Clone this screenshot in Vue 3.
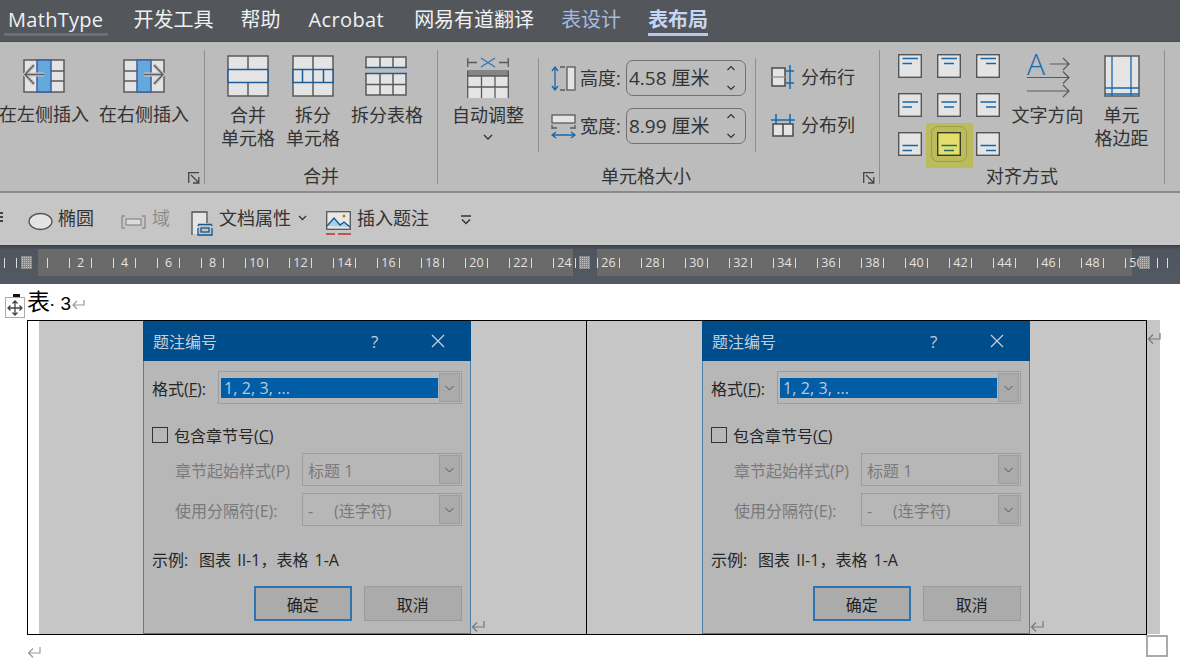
<template>
  <div class="app">
    <nav class="tabs">
      <span
        v-for="tab in tabs"
        :key="tab.name"
        class="tab"
        :class="tab.cls"
      >{{ tab.name }}</span>
    </nav>

    <section class="ribbon">
      <!-- 行和列 -->
      <div class="group group-rows">
        <div class="big-btns">
          <div class="big-btn insert-btn">
            <svg class="icon" width="42" height="34" viewBox="0 0 42 34">
              <rect x="1" y="1" width="40" height="32" fill="#e4e4e4" stroke="#5a5a5a" stroke-width="1.5" />
              <rect x="14" y="1" width="14" height="32" fill="#64a8dc" stroke="#3c5fa0" stroke-width="1.5" />
              <path d="M28 12h13M28 22h13" stroke="#5a5a5a" stroke-width="1.5" fill="none" />
              <path d="M21 15.5H3M11 6l-9 9.500 9 9.500" stroke="#c8c8c8" stroke-width="4" fill="none" />
              <path d="M21 15.500H3M11 6l-9 9.500 9 9.500" stroke="#5f5f5f" stroke-width="1.500" fill="none" />
            </svg>
            <span>在左侧插入</span>
          </div>
          <div class="big-btn insert-btn">
            <svg class="icon" width="42" height="34" viewBox="0 0 42 34">
              <rect x="1" y="1" width="40" height="32" fill="#e4e4e4" stroke="#5a5a5a" stroke-width="1.5" />
              <rect x="14" y="1" width="14" height="32" fill="#64a8dc" stroke="#3c5fa0" stroke-width="1.5" />
              <path d="M1 12h13M1 22h13" stroke="#5a5a5a" stroke-width="1.5" fill="none" />
              <path d="M21 15.500h18M31 6l9 9.500-9 9.500" stroke="#c8c8c8" stroke-width="4" fill="none" />
              <path d="M21 15.500h18M31 6l9 9.500-9 9.500" stroke="#5f5f5f" stroke-width="1.500" fill="none" />
            </svg>
            <span>在右侧插入</span>
          </div>
        </div>
        <svg class="launcher" width="12" height="12" viewBox="0 0 12 12">
          <path d="M.7 11V.7H11M3 3l7.500 7.500M10.800 5v6H5" fill="none" stroke="#444" stroke-width="1.300" />
        </svg>
      </div>

      <!-- 合并 -->
      <div class="group group-merge">
        <div class="big-btns">
          <div class="big-btn merge-btn">
            <svg class="icon tall" width="42" height="42" viewBox="0 0 42 42">
              <rect x="1" y="1" width="40" height="40" fill="#e4e4e4" stroke="#5a5a5a" stroke-width="1.500" />
              <path d="M21 1v14M21 27v14" stroke="#5a5a5a" stroke-width="1.500" />
              <rect x="1" y="14.500" width="40" height="13" fill="#e4e4e4" stroke="#1f5c96" stroke-width="1.500" />
            </svg>
            <span>合并<br />单元格</span>
          </div>
          <div class="big-btn split-btn">
            <svg class="icon tall" width="42" height="42" viewBox="0 0 42 42">
              <rect x="1" y="1" width="40" height="40" fill="#e4e4e4" stroke="#5a5a5a" stroke-width="1.500" />
              <path d="M21 1v14M21 27v14" stroke="#5a5a5a" stroke-width="1.500" />
              <rect x="1" y="14.500" width="40" height="13" fill="#e4e4e4" stroke="#1f5c96" stroke-width="1.500" />
              <path d="M10.500 14v13M21 14v13M31.500 14v13" stroke="#1f5c96" stroke-width="1.500" />
            </svg>
            <span>拆分<br />单元格</span>
          </div>
          <div class="big-btn table-btn">
            <svg class="icon tall" width="42" height="42" viewBox="0 0 42 42">
              <rect x="1" y="2" width="40" height="38" fill="#e4e4e4" stroke="#5a5a5a" stroke-width="1.500" />
              <path d="M15 2v11M28 2v11M15 19v21M28 19v21M1 29.500h40" stroke="#5a5a5a" stroke-width="1.500" />
              <rect x="0" y="13" width="42" height="5.500" fill="#bcbcbc" />
              <path d="M0 12.500h42M0 18.500h42" stroke="#1f5c96" stroke-width="1.500" />
            </svg>
            <span>拆分表格</span>
          </div>
        </div>
        <div class="group-label">合并</div>
      </div>

      <!-- 单元格大小 -->
      <div class="group group-size">
        <div class="size-body">
          <div class="auto-btn">
            <svg class="icon" width="42" height="41" viewBox="0 0 42 41">
              <path d="M.7 1v9M41.300 1v9M1 5.500h9M32 5.500h9" stroke="#5a5a5a" stroke-width="1.300" />
              <path d="M14 1l14 9M28 1L14 10" stroke="#2a77b8" stroke-width="1.300" />
              <rect x="0" y="14" width="42" height="27" fill="#e4e4e4" />
              <rect x="0" y="13" width="42" height="6" fill="#858585" />
              <path d="M.7 14v27M41.300 14v27M14.500 19v22M28 19v22M0 30h42M0 19h42" stroke="#5a5a5a" stroke-width="1.300" />
            </svg>
            <span>自动调整</span>
            <svg class="auto-chev" width="10" height="7" viewBox="0 0 10 7">
              <path d="M1 1l4 4 4-4" fill="none" stroke="#333" stroke-width="1.300" />
            </svg>
          </div>
          <div class="v-sep"></div>
          <div class="size-fields">
            <div class="size-row">
              <svg width="26" height="25" viewBox="0 0 26 25">
                <path d="M4 1v23M1 5l3-4 3 4M1 20l3 4 3-4" fill="none" stroke="#1468ad" stroke-width="1.300" />
                <path d="M9 1h5M9 24h5" stroke="#5a5a5a" stroke-width="1.300" />
                <rect x="16" y="1" width="8" height="23" fill="#e4e4e4" stroke="#5a5a5a" stroke-width="1.300" />
              </svg>
              <label>高度:</label>
              <div class="spin">
                <span>4.58 厘米</span>
                <svg width="10" height="28" viewBox="0 0 10 28">
                  <path d="M1.500 6l3.500-3.500L8.500 6M1.500 22l3.500 3.500L8.500 22" fill="none" stroke="#333" stroke-width="1.200" />
                </svg>
              </div>
            </div>
            <div class="size-row">
              <svg width="26" height="25" viewBox="0 0 26 25">
                <rect x="1" y="1" width="23" height="8" fill="#e4e4e4" stroke="#5a5a5a" stroke-width="1.300" />
                <path d="M1 11v4M24 11v4M1 14h5M19 14h5" stroke="#5a5a5a" stroke-width="1.300" fill="none" />
                <path d="M1 21h23M5 18l-4 3 4 3M20 18l4 3-4 3" fill="none" stroke="#1468ad" stroke-width="1.300" />
              </svg>
              <label>宽度:</label>
              <div class="spin">
                <span>8.99 厘米</span>
                <svg width="10" height="28" viewBox="0 0 10 28">
                  <path d="M1.500 6l3.500-3.500L8.500 6M1.500 22l3.500 3.500L8.500 22" fill="none" stroke="#333" stroke-width="1.200" />
                </svg>
              </div>
            </div>
          </div>
          <div class="v-sep sep-right"></div>
          <div class="dist-col">
            <div class="dist-row">
              <svg width="24" height="24" viewBox="0 0 24 24">
                <rect x="1" y="3" width="13" height="18" fill="#e4e4e4" stroke="#4a4a4a" stroke-width="1.500" />
                <path d="M1 12h13" stroke="#9a9a9a" stroke-width="1.500" />
                <path d="M19 0v24M15 6h8M15 18h8" stroke="#1468ad" stroke-width="1.500" />
              </svg>
              <span>分布行</span>
            </div>
            <div class="dist-row">
              <svg width="24" height="24" viewBox="0 0 24 24">
                <rect x="2" y="11" width="20" height="12" fill="#e4e4e4" stroke="#4a4a4a" stroke-width="1.500" />
                <path d="M12 11v12" stroke="#4a4a4a" stroke-width="1.500" />
                <path d="M0 7h24M5 1v10M19 1v10" stroke="#1468ad" stroke-width="1.500" />
              </svg>
              <span>分布列</span>
            </div>
          </div>
        </div>
        <div class="group-label label-size">单元格大小</div>
        <svg class="launcher" width="12" height="12" viewBox="0 0 12 12">
          <path d="M.7 11V.7H11M3 3l7.500 7.500M10.800 5v6H5" fill="none" stroke="#444" stroke-width="1.300" />
        </svg>
      </div>

      <!-- 对齐方式 -->
      <div class="group group-align">
        <div class="align-body">
          <div class="align-grid">
            <div
              v-for="a in aligns"
              :key="a.key"
              class="align-cell"
              :class="{ active: a.active }"
            >
              <svg width="24" height="24" viewBox="0 0 24 24">
                <rect x=".7" y=".7" width="22.600" height="22.600" :fill="a.active ? '#e5de6c' : '#e4e4e4'" :stroke="a.active ? '#3c3c24' : '#555'" stroke-width="1.400" />
                <path :d="a.d" :stroke="a.active ? '#16706c' : '#1468ad'" stroke-width="1.300" fill="none" />
              </svg>
            </div>
          </div>
          <div class="big-btn dir-btn">
            <svg class="icon dir-icon" width="44" height="44" viewBox="0 0 44 44">
              <text x="0" y="22" class="dir-a">A</text>
              <path d="M23 11h19M36 5l6 6-6 6" fill="none" stroke="#5a5a5a" stroke-width="1.200" />
              <path d="M0 24.500h42M36 18.500l6 6-6 6" fill="none" stroke="#5a5a5a" stroke-width="1.200" />
              <path d="M0 38h42M36 32l6 6-6 6" fill="none" stroke="#5a5a5a" stroke-width="1.200" />
            </svg>
            <span>文字方向</span>
          </div>
          <div class="big-btn margin-btn">
            <svg class="icon" width="36" height="42" viewBox="0 0 36 42">
              <rect x="1" y="1" width="34" height="40" fill="#e4e4e4" stroke="#5a5a5a" stroke-width="1.500" />
              <path d="M8 1v40M27 1v40M1 33h34M1 39h34" stroke="#1468ad" stroke-width="1.300" />
            </svg>
            <span>单元<br />格边距</span>
          </div>
        </div>
        <div class="group-label">对齐方式</div>
      </div>
    </section>

    <section class="quick">
      <span class="quick-cut"></span>
      <svg class="q-ellipse" width="25" height="19" viewBox="0 0 25 19">
        <ellipse cx="12.500" cy="9.500" rx="11.500" ry="8" fill="#e4e4e4" stroke="#555" stroke-width="1.300" />
      </svg>
      <span class="q-text q-oval">椭圆</span>
      <svg class="q-field" width="25" height="14" viewBox="0 0 25 14">
        <path d="M4 1H1v12h3M21 1h3v12h-3" fill="none" stroke="#8d8d8d" stroke-width="1.300" />
        <rect x="5" y="4" width="15" height="6" fill="#dcdcdc" stroke="#8d8d8d" stroke-width="1.300" />
      </svg>
      <span class="q-text q-off">域</span>
      <svg class="q-doc" width="22" height="25" viewBox="0 0 22 25">
        <rect x="1.500" y="2" width="14" height="21" fill="#e4e4e4" />
        <path d="M1 24V1h15v11" fill="none" stroke="#555" stroke-width="1.300" />
        <rect x="7" y="13" width="14" height="11" fill="#c6c6c6" />
        <path d="M7 17v7h14v-7M7 14v1M21 14v1M7 13.500h14" fill="none" stroke="#14588f" stroke-width="1.300" />
        <rect x="10" y="17" width="8" height="4" fill="none" stroke="#14588f" stroke-width="1.300" />
      </svg>
      <span class="q-text q-prop">文档属性</span>
      <svg class="q-chev" width="9" height="6" viewBox="0 0 9 6">
        <path d="M1 1l3.500 3.500L8 1" fill="none" stroke="#333" stroke-width="1.300" />
      </svg>
      <svg class="q-pic" width="25" height="25" viewBox="0 0 25 25">
        <rect x=".7" y=".7" width="23.600" height="17.600" fill="#e8e8e8" stroke="#555" stroke-width="1.300" />
        <path d="M1 15l7-8 6 7 4-3 6 5" fill="#a9cfe8" stroke="#14588f" stroke-width="1.300" />
        <circle cx="18" cy="5" r="1.500" fill="#c77c1c" />
        <path d="M0 23h9M12 23h13" stroke="#b8322c" stroke-width="1.400" />
      </svg>
      <span class="q-text q-cap">插入题注</span>
      <svg class="q-more" width="12" height="11" viewBox="0 0 12 11">
        <path d="M1 1h10M2 4.500l4 4 4-4" fill="none" stroke="#333" stroke-width="1.500" />
      </svg>
    </section>

    <section class="ruler">
      <div class="band band-a"></div>
      <div class="band band-b"></div>
      <span class="r-tick tick-1"></span>
      <span class="r-tick tick-2"></span>
      <span class="r-tick tick-3"></span>
      <span class="r-tick tick-4"></span>
      <div class="scale">
        <div v-for="n in 50" :key="n" class="scale-cell">
          <span v-if="n % 2 === 0">{{ n }}</span>
        </div>
      </div>
      <i class="grip grip-1"></i>
      <i class="grip grip-2"></i>
      <i class="grip grip-3"></i>
    </section>

    <main class="doc">
      <span class="cursor-mark"></span>
      <div class="move-handle">
        <svg width="16" height="16" viewBox="0 0 16 16">
          <path d="M8 1v14M1 8h14M5.500 3.500L8 1l2.500 2.500M5.500 12.500L8 15l2.500-2.500M3.500 5.500L1 8l2.500 2.500M12.500 5.500L15 8l-2.500 2.500" fill="none" stroke="#444" stroke-width="1.300" />
        </svg>
      </div>
      <div class="caption">
        <span class="cap-big">表</span><span class="cap-num">·&nbsp;3</span>
        <svg class="ret" width="13" height="10" viewBox="0 0 13 10">
          <path d="M12 0v5H1M5 1L1 5l4 4" fill="none" stroke="#999" stroke-width="1.200" />
        </svg>
      </div>
      <div class="table-wrap">
        <div class="table">
          <div v-for="i in 2" :key="i" class="cell" :class="'cell-' + i">
            <div class="dialog">
              <header class="dlg-title">
                <span class="dlg-name">题注编号</span>
                <span class="dlg-help">?</span>
                <svg class="dlg-close" width="14" height="14" viewBox="0 0 14 14">
                  <path d="M1 1l12 12M13 1L1 13" stroke="#c4d2de" stroke-width="1.200" />
                </svg>
              </header>
              <div class="dlg-body">
                <div class="row row-format">
                  <span class="lbl lbl-format">格式(<u>F</u>):</span>
                  <div class="combo combo-format">
                    <span class="combo-value selected">1, 2, 3, ...</span>
                    <span class="combo-btn">
                      <svg width="9" height="6" viewBox="0 0 9 6"><path d="M.5 1l4 4 4-4" fill="none" stroke="#555" stroke-width="1" /></svg>
                    </span>
                  </div>
                </div>
                <div class="row row-check">
                  <span class="checkbox"></span>
                  <span class="lbl">包含章节号(<u>C</u>)</span>
                </div>
                <div class="row row-sub">
                  <span class="lbl lbl-off lbl-sub">章节起始样式(P)</span>
                  <div class="combo combo-sub">
                    <span class="combo-value off">标题 1</span>
                    <span class="combo-btn">
                      <svg width="9" height="6" viewBox="0 0 9 6"><path d="M.5 1l4 4 4-4" fill="none" stroke="#555" stroke-width="1" /></svg>
                    </span>
                  </div>
                </div>
                <div class="row row-sub row-sub2">
                  <span class="lbl lbl-off lbl-sub">使用分隔符(E):</span>
                  <div class="combo combo-sub">
                    <span class="combo-value off">-&nbsp;&nbsp;&nbsp;&nbsp;&nbsp;(连字符)</span>
                    <span class="combo-btn">
                      <svg width="9" height="6" viewBox="0 0 9 6"><path d="M.5 1l4 4 4-4" fill="none" stroke="#555" stroke-width="1" /></svg>
                    </span>
                  </div>
                </div>
                <div class="sample"><span class="sample-key">示例:</span>图表 II-1，表格 1-A</div>
                <div class="dlg-actions">
                  <button type="button" class="btn btn-ok">确定</button>
                  <button type="button" class="btn">取消</button>
                </div>
              </div>
            </div>
            <svg class="ret cell-ret" width="14" height="13" viewBox="0 0 14 13">
              <path d="M13 1v6H2M6 2.500L1.500 7 6 11.500" fill="none" stroke="#777" stroke-width="1.200" />
            </svg>
          </div>
        </div>
        <div class="table-ext">
          <svg class="ret" width="14" height="13" viewBox="0 0 14 13">
            <path d="M13 1v6H2M6 2.500L1.500 7 6 11.500" fill="none" stroke="#777" stroke-width="1.200" />
          </svg>
        </div>
      </div>
      <div class="after">
        <svg class="ret" width="14" height="13" viewBox="0 0 14 13">
          <path d="M13 1v6H2M6 2.500L1.500 7 6 11.500" fill="none" stroke="#999" stroke-width="1.200" />
        </svg>
      </div>
      <span class="resize-handle"></span>
    </main>
  </div>
</template>

<script setup>
const tabs = [
  { name: 'MathType', cls: 'tab-math' },
  { name: '开发工具' },
  { name: '帮助', cls: 'tab-help' },
  { name: 'Acrobat', cls: 'tab-acro' },
  { name: '网易有道翻译' },
  { name: '表设计', cls: 'tab-ctx' },
  { name: '表布局', cls: 'tab-active' },
];

// 九宫格对齐图标: 长线和短线的位置
const xs = [
  [4.5, 14],
  [7, 17],
  [10, 20],
];
const ys = [
  [4.5, 9.5],
  [9, 14],
  [13.5, 18.5],
];
const aligns = [];
ys.forEach((y, r) => {
  xs.forEach((x, c) => {
    aligns.push({
      key: r + '-' + c,
      active: r === 2 && c === 1,
      d: `M4.5 ${y[0]}H20M${x[0]} ${y[1]}H${x[1]}`,
    });
  });
});
</script>

<style scoped>
.app {
  width: 1180px;
  height: 665px;
  overflow: hidden;
  font-family: "Open Sans", "Noto Sans CJK SC", sans-serif;
  color: #333;
  background: #fff;
}

/* 选项卡 */
.tabs {
  height: 41px;
  box-sizing: border-box;
  display: flex;
  gap: 27px;
  padding-left: 8px;
  background: #53575c;
  font-size: 20px;
  line-height: 40px;
  color: #f0f0f0;
}
.tab {
  position: relative;
  white-space: nowrap;
}
.tab-math {
  margin-right: 3px;
  letter-spacing: 0.3px;
}
.tab-help {
  margin-right: 1px;
}
.tab-acro {
  margin-right: 3px;
  letter-spacing: 0.4px;
}
.tab-math::after,
.tab-active::after {
  content: "";
  position: absolute;
  left: 0;
  right: 0;
  bottom: 5px;
  height: 3px;
}
.tab-math::after {
  left: -4px;
  right: -5px;
  background: #6d7073;
}
.tab-ctx {
  color: #a4bce0;
}
.tab-active {
  color: #c4d6f4;
  font-weight: 700;
}
.tab-active::after {
  background: #b4c9ef;
}

/* 功能区 */
.ribbon {
  height: 152px;
  box-sizing: border-box;
  display: flex;
  padding-top: 8px;
  background: #bcbcbc;
  border-top: 1px solid #4a4c50;
  border-bottom: 2px solid #8a8a8a;
  font-size: 18px;
  line-height: 23px;
}
.group {
  position: relative;
  box-sizing: border-box;
  height: 134px;
  border-right: 1px solid #8f8f8f;
}
.group-rows {
  width: 205px;
}
.group-merge {
  width: 233px;
}
.group-size {
  width: 442px;
}
.group-align {
  width: 285px;
}
.group-label {
  position: absolute;
  left: 0;
  right: 0;
  bottom: -4px;
  text-align: center;
}
.label-size {
  right: 25px;
}
.launcher {
  position: absolute;
  right: 4px;
  bottom: 0;
}
.big-btns {
  display: flex;
  padding-top: 9px;
}
.big-btn {
  display: flex;
  flex-direction: column;
  align-items: center;
  text-align: center;
  white-space: nowrap;
}
.icon {
  display: block;
}
.insert-btn {
  width: 100px;
}
.insert-btn:first-child {
  margin-left: -6px;
}
.insert-btn .icon {
  margin-bottom: 10px;
}
.group-merge .big-btns {
  padding-top: 5px;
}
.tall {
  margin-bottom: 7px;
}
.merge-btn {
  width: 66px;
  margin-left: 10px;
}
.split-btn {
  width: 64px;
}
.table-btn {
  width: 84px;
}
.table-btn .icon {
  margin-right: 2px;
}

.size-body {
  display: flex;
  height: 100%;
}
.auto-btn {
  width: 100px;
  padding-top: 7px;
  display: flex;
  flex-direction: column;
  align-items: center;
  box-sizing: border-box;
}
.auto-btn .icon {
  margin-bottom: 6px;
}
.auto-chev {
  margin-top: 7px;
}
.v-sep {
  width: 1px;
  height: 94px;
  margin-top: 8px;
  background: #8f8f8f;
}
.size-fields {
  width: 216px;
  box-sizing: border-box;
  padding: 10px 0 0 12px;
  display: flex;
  flex-direction: column;
  gap: 12px;
}
.size-row {
  display: flex;
  align-items: center;
  height: 36px;
}
.size-row label {
  margin-left: 3px;
  width: 46px;
  white-space: nowrap;
}
.spin {
  width: 120px;
  height: 36px;
  box-sizing: border-box;
  border: 1px solid #707070;
  border-radius: 7px;
  display: flex;
  align-items: center;
  justify-content: space-between;
  padding: 0 9px 0 2px;
  font-size: 19px;
  color: #333;
}
.dist-col {
  padding: 15px 0 0 15px;
  display: flex;
  flex-direction: column;
  gap: 24px;
}
.dist-row {
  display: flex;
  align-items: center;
  gap: 6px;
  height: 24px;
  white-space: nowrap;
}

.align-body {
  display: flex;
  height: 100%;
}
.align-grid {
  display: grid;
  grid-template-columns: repeat(3, 24px);
  grid-auto-rows: 24px;
  gap: 15px;
  padding: 4px 0 0 18px;
  height: max-content;
}
.align-cell {
  position: relative;
  z-index: 0;
}
.align-cell svg {
  display: block;
}
.align-cell.active::before {
  content: "";
  position: absolute;
  z-index: -2;
  left: -11px;
  top: -9px;
  width: 47px;
  height: 45px;
  background: #bdbc5c;
}
.align-cell.active::after {
  content: "";
  position: absolute;
  z-index: -1;
  left: -6px;
  top: -6px;
  width: 34px;
  height: 34px;
  border: 1px solid #9d9c46;
  border-radius: 7px;
}
.dir-btn {
  margin-left: 11px;
  width: 73px;
  padding-top: 3px;
}
.dir-btn .icon {
  margin-bottom: 7px;
  margin-left: 2px;
}
.dir-icon {
  overflow: visible;
}
.dir-a {
  font-family: "Open Sans", sans-serif;
  font-weight: 300;
  font-size: 30px;
  fill: #1468ad;
}
.margin-btn {
  margin-left: 1px;
  width: 73px;
  padding-top: 5px;
}
.margin-btn .icon {
  margin-bottom: 7px;
}

/* 快速工具栏 */
.quick {
  height: 52px;
  display: flex;
  align-items: center;
  background: #c6c6c6;
  font-size: 18px;
  white-space: nowrap;
  box-sizing: border-box;
  padding-bottom: 3px;
}
.quick-cut {
  width: 3px;
  height: 12px;
  background: repeating-linear-gradient(#444 0 2px, transparent 2px 4px);
}
.q-ellipse {
  margin-left: 25px;
  margin-top: 8px;
}
.q-text {
  line-height: 24px;
}
.q-oval {
  margin-left: 5px;
}
.q-field {
  margin-left: 27px;
  margin-top: 8px;
}
.q-off {
  margin-left: 6px;
  color: #8d8d8d;
}
.q-doc {
  margin-left: 21px;
  margin-top: 12px;
}
.q-prop {
  margin-left: 6px;
}
.q-chev {
  margin-left: 7px;
}
.q-pic {
  margin-left: 19px;
  margin-top: 12px;
}
.q-cap {
  margin-left: 6px;
}
.q-more {
  margin-left: 31px;
  margin-top: 6px;
}

/* 标尺 */
.ruler {
  position: relative;
  height: 39px;
  background: linear-gradient(#3c4046 0, #4f5660 5px, #525962 100%);
}
.band {
  position: absolute;
  top: 4px;
  height: 27px;
  background: #6a6a6a;
}
.band-a {
  left: 38px;
  width: 535px;
}
.band-b {
  left: 597px;
  width: 535px;
}
.scale {
  position: absolute;
  left: 47px;
  top: 13px;
  display: flex;
  font-size: 12.500px;
  line-height: 10px;
  color: #e2e2e2;
}
.scale-cell {
  width: 22px;
  height: 10px;
  box-sizing: border-box;
  border-left: 1px solid #dcdcdc;
  text-align: center;
}
.r-tick {
  position: absolute;
  top: 13px;
  width: 1px;
  height: 10px;
  background: #dcdcdc;
}
.tick-1 {
  left: 4px;
}
.tick-2 {
  left: 16px;
}
.tick-3 {
  left: 1157px;
}
.tick-4 {
  left: 1167px;
}
.grip {
  position: absolute;
  top: 11px;
  width: 11px;
  height: 13px;
  background-color: #c4c4c4;
  background-image:
    repeating-linear-gradient(90deg, #8a8a8a 0 1px, transparent 1px 2px),
    repeating-linear-gradient(#8a8a8a 0 1px, transparent 1px 2px);
}
.grip-1 {
  left: 21px;
}
.grip-2 {
  left: 579px;
}
.grip-3 {
  left: 1139px;
}

/* 文档 */
.doc {
  position: relative;
  height: 381px;
}
.cursor-mark {
  position: absolute;
  left: 13px;
  top: 10px;
  width: 7px;
  height: 4px;
  background: #111;
}
.move-handle {
  position: absolute;
  left: 5px;
  top: 13px;
  z-index: 1;
  width: 20px;
  height: 21px;
  box-sizing: border-box;
  border: 1.500px solid #ababab;
  background: #fff;
  display: flex;
  align-items: center;
  justify-content: center;
}
.caption {
  height: 36px;
  padding-left: 27px;
  display: flex;
  align-items: baseline;
  box-sizing: border-box;
  color: #000;
  font-family: "Liberation Sans", "Noto Sans CJK SC", sans-serif;
  line-height: 37px;
}
.cap-big {
  font-size: 23px;
}
.cap-num {
  font-size: 19px;
  margin-left: -1px;
}
.caption .ret {
  margin-left: 1px;
}
.table-wrap {
  display: flex;
  margin-left: 27px;
}
.table {
  display: flex;
  width: 1120px;
  height: 315px;
  box-sizing: border-box;
  border: 1px solid #000;
}
.cell {
  position: relative;
  height: 313px;
  background: #c6c6c6;
  display: flex;
  box-sizing: border-box;
}
.cell-1 {
  margin-left: 11px;
  padding-left: 104px;
  border-right: 1px solid #000;
  width: 548px;
}
.cell-2 {
  flex: 1;
  padding-left: 115px;
}
.cell-ret {
  position: absolute;
  bottom: 1px;
}
.cell-1 .cell-ret {
  left: 432px;
}
.cell-2 .cell-ret {
  left: 443px;
}
.table-ext {
  width: 13px;
  height: 314px;
  background: #c6c6c6;
  padding: 12px 0 0 0;
  box-sizing: border-box;
}
.table-ext .ret {
  display: block;
}
.dialog {
  width: 328px;
  height: 313px;
  box-sizing: border-box;
  border: 1px solid #4a7fa8;
  border-top: 0;
  background: #b7b7b7;
  font-size: 16px;
  color: #262626;
  display: flex;
  flex-direction: column;
}
.dlg-title {
  height: 40px;
  flex: none;
  margin: 0 -1px;
  background: #004d8c;
  color: #c3d0dc;
  display: flex;
  align-items: center;
  padding-left: 10px;
}
.dlg-name {
  width: 218px;
}
.dlg-help {
  width: 60px;
  font-size: 17px;
}
.dlg-body {
  padding: 10px 8px 0 8px;
}
.row {
  display: flex;
  align-items: center;
}
.lbl {
  white-space: nowrap;
}
.lbl-format {
  width: 66px;
}
.row-check {
  margin-top: 22px;
  gap: 6px;
  height: 18px;
}
.checkbox {
  width: 16px;
  height: 16px;
  box-sizing: border-box;
  border: 1px solid #333;
  background: #b7b7b7;
}
.row-sub {
  margin-top: 9px;
  padding-left: 23px;
}
.row-sub2 {
  margin-top: 7px;
}
.lbl-off {
  color: #7a7a7a;
}
.lbl-sub {
  width: 127px;
}
.combo {
  display: flex;
  align-items: center;
  height: 33px;
  box-sizing: border-box;
  border: 1px solid #9d9d9d;
  padding: 1px;
}
.combo-format {
  width: 244px;
  padding: 1px 1px 1px 2px;
}
.combo-sub {
  width: 160px;
}
.combo-value {
  flex: 1;
  padding-left: 4px;
  white-space: nowrap;
}
.selected {
  height: 20px;
  line-height: 20px;
  margin-right: 1px;
  background: #005da6;
  color: #b9cbe0;
  padding-left: 3px;
  letter-spacing: 0.1px;
}
.off {
  color: #7a7a7a;
}
.combo-btn {
  width: 21px;
  height: 100%;
  box-sizing: border-box;
  border: 1px solid #9d9d9d;
  background: #ababab;
  display: flex;
  align-items: center;
  justify-content: center;
}
.sample {
  margin-top: 22px;
  line-height: 24px;
  white-space: nowrap;
  word-spacing: 2px;
}
.sample-key {
  display: inline-block;
  width: 47px;
}
.dlg-actions {
  margin-top: 14px;
  padding-left: 102px;
  display: flex;
  gap: 12px;
}
.btn {
  width: 99px;
  height: 35px;
  box-sizing: border-box;
  border: 1px solid #9a9a9a;
  background: #ababab;
  font: inherit;
  color: #222;
  padding: 0;
}
.btn-ok {
  width: 98px;
  border: 2px solid #2d74b4;
}
.after {
  padding: 7px 0 0 27px;
}
.resize-handle {
  position: absolute;
  left: 1146px;
  top: 351px;
  width: 22px;
  height: 22px;
  box-sizing: border-box;
  border: 2px solid #aaa;
  background: #fff;
}
</style>
